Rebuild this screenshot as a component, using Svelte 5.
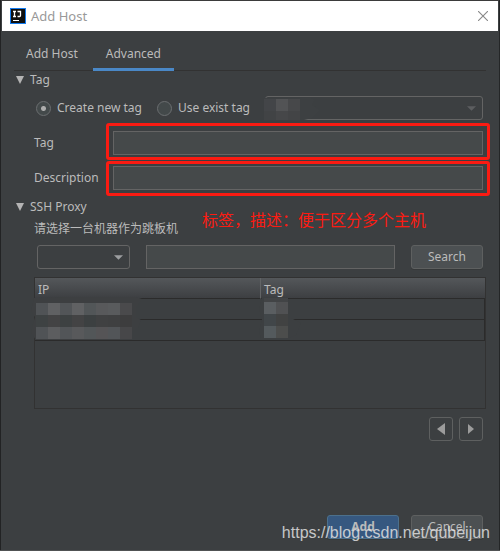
<script>
  let tagMode = $state('new');
  let tag = $state('');
  let description = $state('');
  let query = $state('');

  const ipCells = [
    ['#505356', '#606163', '#525558', '#606163', '#525658', '#58595b', '#595b5d', '#4a4a4c'],
    ['#3e4243', '#434344', '#3d4142', '#434344', '#3c4041', '#404142', '#3f4041', '#3d3d3e'],
    ['#505356', '#5c5d5f', '#525558', '#58595b', '#525658', '#555456', '#525558', '#474749'],
  ];
  const tagCells = [
    ['#5a5e61', '#505153'],
    ['#414649', '#414242'],
    ['#545a5d', '#4c4d4c'],
  ];
  const comboCells = [
    ['#434548', '#525355', '#47484a'],
    ['#414345', '#464749', '#434446'],
  ];
</script>

{#snippet mosaic(cells, last = 12)}
  {#each cells as line, r}
    {#each line as fill, c}
      <rect x={c * 12} y={r * 12} width="12" height={r === cells.length - 1 ? last : 12} {fill} />
    {/each}
  {/each}
{/snippet}

<div class="window">
  <header class="titlebar">
    <svg class="logo" viewBox="0 0 16 16" aria-hidden="true">
      <rect width="16" height="16" fill="#147cf0" />
      <rect x="1" y="1" width="14" height="14" fill="#101010" />
      <path d="M3 3.5h3M4.500 3.500v4.500M3 8.500h3M7.500 3.500h3v4q0 1-1 1H7.500" fill="none" stroke="#fff" stroke-width="1.3" />
      <path d="M3 12.500h6" stroke="#fff" />
    </svg>
    <h1>Add Host</h1>
    <button class="close" aria-label="Close">
      <svg viewBox="0 0 10 10" aria-hidden="true"><path d="M0 0l10 10M10 0L0 10" stroke="#888" stroke-width="1.1" /></svg>
    </button>
  </header>

  <main>
    <nav class="tabs">
      <button>Add Host</button>
      <button class="active">Advanced</button>
    </nav>

    <section>
      <h2><svg viewBox="0 0 8 8" aria-hidden="true"><path d="M0 0h8L4 8z" /></svg>Tag</h2>
      <div class="modes">
        <label><input type="radio" name="mode" value="new" bind:group={tagMode} />Create new tag</label>
        <label><input type="radio" name="mode" value="exist" bind:group={tagMode} />Use exist tag</label>
        <div class="combo muted">
          <select aria-label="Existing tag" disabled><option></option></select>
          <svg class="arrow" viewBox="0 0 10 5" aria-hidden="true"><path d="M0 0h10L5 5z" /></svg>
          <svg class="mask" width="57" height="24" viewBox="-1 -2 57 24" aria-hidden="true">
            <path d="M0-1h47l4 2-3 5 8 5-8 8-12 3H0z" fill="#3d4042" />
            {@render mosaic(comboCells, 9)}
          </svg>
        </div>
      </div>
      <div class="field">
        <label for="tag">Tag</label>
        <div class="marked"><input id="tag" type="text" bind:value={tag} /></div>
      </div>
      <div class="field">
        <label for="description">Description</label>
        <div class="marked low"><input id="description" type="text" bind:value={description} /></div>
      </div>
    </section>

    <section class="proxy">
      <h2><svg viewBox="0 0 8 8" aria-hidden="true"><path d="M0 0h8L4 8z" /></svg>SSH Proxy</h2>
      <p>请选择一台机器作为跳板机</p>
      <div class="note">标签，描述：便于区分多个主机</div>
      <div class="search">
        <div class="combo">
          <select aria-label="Search by"><option></option></select>
          <svg class="arrow" viewBox="0 0 10 5" aria-hidden="true"><path d="M0 0h10L5 5z" /></svg>
        </div>
        <input type="text" aria-label="Search text" bind:value={query} />
        <button class="btn">Search</button>
      </div>
      <div class="hosts">
        <table>
          <thead><tr><th>IP</th><th>Tag</th></tr></thead>
          <tbody>
            <tr>
              <td>
                <svg class="mask" width="112" height="44" viewBox="-5 -6 112 44" aria-hidden="true">
                  <path d="M-2-5L30-6h70l6 2-6 9v9l5 3-3 8-6 4v8H0l-5-7 2-9 2-7-4-6z" fill="#3d3f41" />
                  {@render mosaic(ipCells)}
                </svg>
              </td>
              <td>
                <svg class="mask" width="44" height="44" viewBox="-5 -5 44 44" aria-hidden="true">
                  <path d="M-2-5h24l3 4v16l12 6-5 12-10 4H-3l-2-8 3-12-3-10z" fill="#3c3f41" />
                  <rect y="-4" width="24" height="4" fill="#424446" />
                  {@render mosaic(tagCells)}
                </svg>
              </td>
            </tr>
            <tr><td></td><td></td></tr>
          </tbody>
        </table>
      </div>
      <div class="pager">
        <button aria-label="Previous page"><svg viewBox="0 0 8 12" aria-hidden="true"><path d="M8 0v12L0 6z" /></svg></button>
        <button aria-label="Next page"><svg class="next" viewBox="0 0 6 10" aria-hidden="true"><path d="M0 0v10l6-5z" /></svg></button>
      </div>
    </section>

    <footer>
      <button class="btn primary">Add</button>
      <button class="btn">Cancel</button>
      <div class="watermark">https://blog.csdn.net/qubeijun</div>
    </footer>
  </main>
</div>

<style>
  :global(body) { margin: 0; background: #3c3f41; }
  * { box-sizing: border-box; }
  .window {
    min-height: 100vh;
    display: flex;
    flex-direction: column;
    padding: 1px 2px 0;
    background: #3c3f41;
    border-bottom: 1px solid #505253;
    box-shadow: inset 1px 0 #222324, inset -1px 0 #242627, inset 0 1px #3b3b3b;
    color: #bbb;
    font: 12px/16px "Noto Sans", "Noto Sans CJK SC", sans-serif;
  }
  button, input, select { font: inherit; color: inherit; margin: 0; padding: 0; }
  h1, h2, p { margin: 0; font: inherit; }
  .titlebar {
    height: 30px;
    display: flex;
    align-items: center;
    gap: 5px;
    padding: 0 10px 0 8px;
    background: #fff;
    color: #999;
  }
  .titlebar h1 { font-size: 13px; }
  .logo { width: 16px; height: 16px; }
  .close { margin-left: auto; width: 10px; height: 10px; border: 0; background: none; display: flex; }
  .close svg { width: 10px; height: 10px; }
  main { flex: 1; display: flex; flex-direction: column; padding: 7px 12px 11px; }
  .tabs { display: flex; gap: 3px; height: 33px; border-bottom: 1px solid #323232; }
  .tabs button { height: 33px; padding: 2px 12px 0; border: 0; border-bottom: 3px solid transparent; background: none; }
  .tabs .active { border-color: #4a88c7; padding: 2px 13px 0; }
  h2 { display: flex; align-items: center; gap: 6px; padding-left: 2px; }
  h2 svg { width: 8px; height: 8px; fill: #b4b4b4; }
  section { padding: 1px 3px 0 0; }
  .modes { display: flex; align-items: center; gap: 15px; margin: 8px 0 11px 22px; }
  .modes label { display: flex; align-items: center; gap: 6px; }
  input[type="radio"] {
    appearance: none;
    width: 15px;
    height: 15px;
    border: 1px solid #6b6e70;
    border-radius: 50%;
    background: #43494a;
  }
  input[type="radio"]:checked { background: radial-gradient(circle, #adadad 2px, #43494a 3px); }
  .combo { position: relative; width: 93px; height: 24px; }
  .combo select {
    display: block;
    appearance: none;
    width: 100%;
    height: 24px;
    border: 1px solid #646464;
    border-radius: 3px;
    background: #3c3f41;
    opacity: 1;
  }
  .arrow { position: absolute; right: 7px; top: 10px; width: 9px; height: 5px; fill: #9c9ea0; }
  .muted { flex: 1; }
  .muted .arrow { fill: #5c5e60; }
  .muted .mask { left: -2px; top: 1px; }
  .mask { position: absolute; left: -4px; top: -2px; }
  .field { display: grid; grid-template-columns: 79px 1fr; align-items: center; padding-left: 20px; margin-bottom: 11px; }
  input[type="text"] { width: 100%; height: 24px; border: 1px solid #646464; border-radius: 0; background: #45494a; padding: 0 5px; }
  .marked { position: relative; display: flex; }
  .marked::after { content: ""; position: absolute; inset: -8px -7px -5px; border: 3px solid #fb1b12; border-radius: 3px; pointer-events: none; }
  .marked.low::after { inset: -5px -7px -6px; }
  .proxy { position: relative; margin-top: -3px; }
  .proxy p { margin: 6px 0 8px 20px; }
  .note { position: absolute; left: 188px; top: 10px; font-size: 16px; line-height: 24px; color: #fb1b12; white-space: nowrap; }
  .search { display: flex; gap: 16px; padding-left: 23px; }
  .search input { flex: 1; width: 0; }
  .btn { width: 72px; height: 24px; flex: none; border: 1px solid #5e6060; border-radius: 3px; background: #4c5052; box-shadow: 0 1px #36393a; }
  .primary { border-color: #4c708c; background: #365880; font-weight: bold; }
  .hosts { margin: 8px -3px 8px 20px; min-height: 132px; border: 1px solid #323232; }
  table { width: 100%; border-collapse: separate; border-spacing: 0; table-layout: fixed; }
  th { height: 21px; padding: 2px 3px 0; text-align: left; font-weight: normal; line-height: 17px; background: linear-gradient(#54575a, #3d3f42); border-bottom: 1px solid #2b2b2b; }
  th + th { border-left: 1px solid #626466; }
  td { position: relative; height: 21px; padding: 0; border-bottom: 1px solid #2b2b2b; }
  td:last-child { border-right: 1px solid #2b2b2b; }
  td:last-child .mask { left: -1px; }
  .pager { display: flex; justify-content: flex-end; gap: 6px; }
  .pager button { width: 24px; height: 24px; display: grid; place-items: center; border: 1px solid #5e6060; border-radius: 3px; background: none; }
  .pager svg { width: 8px; height: 12px; fill: #9c9c9c; }
  .pager .next { width: 6px; height: 10px; }
  footer { position: relative; display: flex; justify-content: flex-end; gap: 12px; margin-top: auto; padding: 16px 3px 0; }
  .watermark { position: absolute; right: -4px; bottom: -4px; font: 16px/20px "Liberation Sans", Arial, sans-serif; color: rgba(225, 225, 225, 0.85); white-space: nowrap; pointer-events: none; }
</style>
